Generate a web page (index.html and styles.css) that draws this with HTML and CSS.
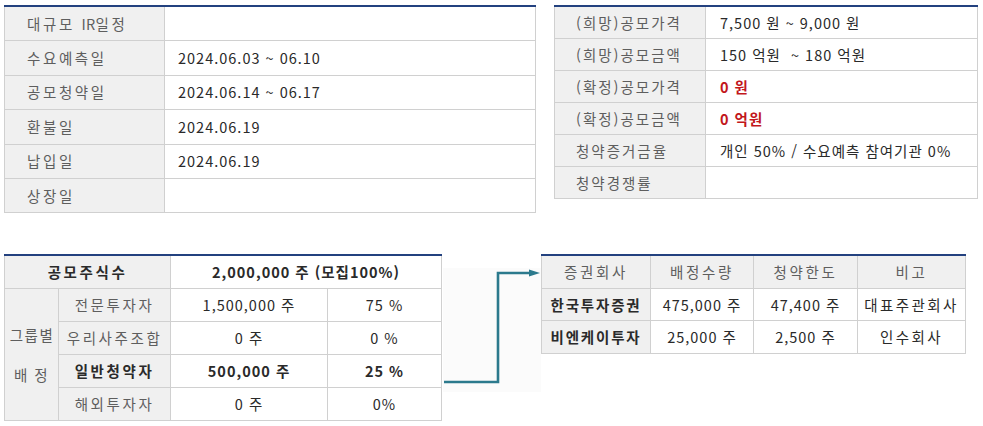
FILE: index.html
```html
<!DOCTYPE html>
<html lang="ko">
<head>
<meta charset="utf-8">
<link rel="stylesheet" href="styles.css">
</head>
<body>
<div class="page">
  <div class="row-top">
    <table class="tbl t1">
      <colgroup><col class="c-lab1"><col></colgroup>
      <tr><th>대규모 <span class="tight">IR</span>일정</th><td></td></tr>
      <tr><th>수요예측일</th><td>2024.06.03 ~ 06.10</td></tr>
      <tr><th>공모청약일</th><td>2024.06.14 ~ 06.17</td></tr>
      <tr><th>환불일</th><td>2024.06.19</td></tr>
      <tr><th>납입일</th><td>2024.06.19</td></tr>
      <tr><th>상장일</th><td></td></tr>
    </table>
    <table class="tbl t2">
      <colgroup><col class="c-lab2"><col></colgroup>
      <tr><th>(희망)공모가격</th><td>7,500 원 ~ 9,000 원</td></tr>
      <tr><th>(희망)공모금액</th><td>150 억원 &nbsp;~ 180 억원</td></tr>
      <tr><th>(확정)공모가격</th><td><span class="red">0 원</span></td></tr>
      <tr><th>(확정)공모금액</th><td><span class="red">0 억원</span></td></tr>
      <tr><th>청약증거금율</th><td>개인 50% / 수요예측 참여기관 0%</td></tr>
      <tr><th>청약경쟁률</th><td></td></tr>
    </table>
  </div>
  <div class="row-bottom">
    <table class="tbl t3">
      <colgroup><col class="c-g"><col class="c-s"><col class="c-n"><col></colgroup>
      <tr><th colspan="2" class="b">공모주식수</th><td colspan="2" class="b">2,000,000 주 (모집100%)</td></tr>
      <tr><th rowspan="4" class="grp">그룹별<br>배 정</th><th>전문투자자</th><td>1,500,000 주</td><td>75 %</td></tr>
      <tr><th>우리사주조합</th><td>0 주</td><td>0 %</td></tr>
      <tr><th class="b">일반청약자</th><td class="b">500,000 주</td><td class="b">25 %</td></tr>
      <tr><th>해외투자자</th><td>0 주</td><td>0%</td></tr>
    </table>
    <div class="arrow-box">
      <svg width="98" height="124" viewBox="0 0 98 124">
        <path d="M1 114 H55 V5 H88" fill="none" stroke="#2c7a8d" stroke-width="2.6"/>
        <path d="M86 1.5 L97 5 L86 8.5 Z" fill="#2c7a8d"/>
      </svg>
    </div>
    <table class="tbl t4">
      <colgroup><col class="c-4a"><col class="c-4b"><col class="c-4c"><col></colgroup>
      <tr><th>증권회사</th><th>배정수량</th><th>청약한도</th><th>비고</th></tr>
      <tr><th class="b">한국투자증권</th><td>475,000 주</td><td>47,400 주</td><td class="kr">대표주관회사</td></tr>
      <tr><th class="b sp">비엔케이투자</th><td>25,000 주</td><td>2,500 주</td><td class="kr">인수회사</td></tr>
    </table>
  </div>
</div>
</body>
</html>
```

FILE: styles.css
```css
html, body {
  margin: 0;
  padding: 0;
  background: #ffffff;
}
body {
  font-family: "Noto Sans CJK KR", "Noto Sans", sans-serif;
  font-size: 14.5px;
  color: #2a2a2a;
}
.page {
  padding: 5px 0 0 4px;
}
.row-top {
  display: flex;
  align-items: flex-start;
  gap: 18px;
}
.row-bottom {
  display: flex;
  align-items: flex-start;
  margin-top: 41px;
}
.tbl {
  border-collapse: collapse;
  border-top: 2px solid #23417f;
  table-layout: fixed;
}
.tbl th, .tbl td {
  border: 1px solid #d0d0d0;
  padding: 0;
  font-weight: normal;
  white-space: nowrap;
  line-height: 18px;
  letter-spacing: 1px;
}
.tbl th {
  letter-spacing: 2.6px;
}
.tight {
  letter-spacing: 0.3px;
}
.tbl tr:first-child th, .tbl tr:first-child td {
  border-top: 2px solid #23417f;
}
.tbl th {
  background: #f0f0f0;
  color: #5e5e5e;
}
.t1 { width: 532px; }
.t1 .c-lab1 { width: 160px; }
.t1 th, .t1 td { height: 33.4px; text-align: left; }
.t1 th { padding-left: 22px; }
.t1 td { padding-left: 13px; }
.t2 { width: 424px; }
.t2 .c-lab2 { width: 151px; }
.t2 th, .t2 td { height: 31px; text-align: left; }
.t2 th { padding-left: 21px; letter-spacing: 2px; }
.t2 td { padding-left: 14px; }
.red {
  color: #c2161b;
  font-weight: bold;
}
.t3 { width: 438px; }
.t3 .c-g { width: 54px; }
.t3 .c-s { width: 112px; }
.t3 .c-n { width: 157px; }
.t3 th, .t3 td { height: 32px; text-align: center; }
.t3 .grp { line-height: 40px; letter-spacing: 1.5px; text-indent: 1px; }
.b { font-weight: bold !important; color: #2a2a2a !important; }
.arrow-box {
  width: 98px;
  height: 124px;
  margin: 14px 0 0 1px;
  background: #fbfbfb;
  display: flex;
}
.t4 { width: 425px; }
.t4 .c-4a { width: 109px; }
.t4 .c-4b { width: 103px; }
.t4 .c-4c { width: 104px; }
.t4 th, .t4 td { height: 31.5px; text-align: center; }
.t4 th.b { letter-spacing: 1.8px; }
.t4 .sp { letter-spacing: 2.4px; }
.t4 td.kr { letter-spacing: 2.4px; }
```
